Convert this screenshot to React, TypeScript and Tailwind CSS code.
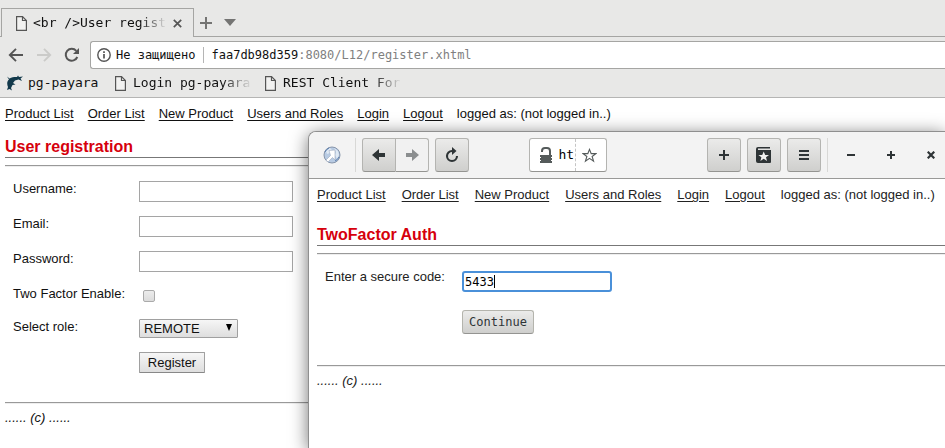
import React from "react";

const SANS = "font-['Liberation_Sans',Arial,sans-serif]";
const MONO = "font-['DejaVu_Sans_Mono',monospace]";

const LINKS = ["Product List", "Order List", "New Product", "Users and Roles", "Login", "Logout"];

function PageIcon() {
  return (
    <svg width="11" height="15" viewBox="0 0 11 15" fill="none" stroke="#555" className="shrink-0">
      <path d="M.6.6H6.5L10.4 4.5V14.4H.6Z" fill="#f2f2f1" strokeWidth="1.2" />
      <path d="M6.5.6V4.5H10.4" strokeWidth="1.2" />
    </svg>
  );
}

function SiteNav({ gap }: { gap: string }) {
  return (
    <nav className={`flex whitespace-nowrap leading-4 ${gap}`}>
      {LINKS.map((l) => (
        <a key={l} href="#" className="underline underline-offset-2">
          {l}
        </a>
      ))}
      <span>logged as: (not logged in..)</span>
    </nav>
  );
}

function Title({ children }: { children: React.ReactNode }) {
  return (
    <h1 className="border-b border-[#777] text-base leading-5 font-bold text-[#d6000c]">{children}</h1>
  );
}

function Rule({ className }: { className: string }) {
  return <hr className={`h-[2px] border-t border-b border-t-[#999] border-b-[#eee] ${className}`} />;
}

function Footer() {
  return <footer className="mt-[6px] leading-4 italic">...... (c) ......</footer>;
}

function TabStrip() {
  return (
    <div className="flex h-[37px] items-end">
      <div className="h-full w-[1px] shrink-0 border-b border-[#a5a5a3]" />
      <div className="flex h-[29px] w-[193px] shrink-0 items-center border-x border-t border-[#a5a5a3] pr-2 pl-[14px]">
        <PageIcon />
        <span className="ml-[6px] w-[134px] shrink-0 mask-r-from-80% text-[13px] whitespace-nowrap">
          {"<br />User regist"}
        </span>
        <button aria-label="Close tab" className="ml-[6px] shrink-0">
          <svg width="9" height="9" viewBox="0 0 9 9" stroke="#555" strokeWidth="1.7">
            <path d="M.8.8 8.2 8.2M8.2.8.8 8.2" />
          </svg>
        </button>
      </div>
      <div className="flex h-full grow items-end gap-3 border-b border-[#a5a5a3] pb-[7px] pl-[6px]">
        <button aria-label="New tab">
          <svg width="12" height="12" viewBox="0 0 12 12" stroke="#747473" strokeWidth="2">
            <path d="M6 0V12M0 6H12" />
          </svg>
        </button>
        <button aria-label="Tab list" className="pb-[3px]">
          <svg width="12" height="7" viewBox="0 0 12 7" fill="#747473">
            <path d="M0 0H12L6 7Z" />
          </svg>
        </button>
      </div>
    </div>
  );
}

function AddressBar() {
  return (
    <div className="flex h-8 items-center pt-1 pl-2">
      <button aria-label="Back">
        <svg width="16" height="14" viewBox="0 0 16 14" fill="none" stroke="#555" strokeWidth="1.9">
          <path d="M15 7H2M8 .8 1.8 7 8 13.2" />
        </svg>
      </button>
      <button aria-label="Forward" className="ml-3">
        <svg width="16" height="14" viewBox="0 0 16 14" fill="none" stroke="#cbcbc9" strokeWidth="1.9">
          <path d="M1 7H14M8 .8 14.2 7 8 13.2" />
        </svg>
      </button>
      <button aria-label="Reload" className="ml-3">
        <svg width="16" height="16" viewBox="0 0 16 16" fill="none" stroke="#555" strokeWidth="2">
          <path d="M13.3 10A6 6 0 1 1 12.3 3.8" />
          <path d="M15 1V7H9Z" fill="#555" stroke="none" />
        </svg>
      </button>
      <div className="ml-[10px] flex h-7 grow items-center rounded-l-[3px] border border-r-0 border-[#a5a5a3] bg-white pl-[6px] text-xs">
        <svg width="14" height="14" viewBox="0 0 14 14" fill="none" stroke="#555" className="shrink-0">
          <circle cx="7" cy="7" r="6.2" strokeWidth="1.4" />
          <path d="M7 6V10.5M7 3.2V4.9" strokeWidth="1.7" />
        </svg>
        <span className="ml-[5px] whitespace-nowrap">Не защищено</span>
        <span className="ml-2 h-4 w-px shrink-0 bg-[#b5b5b5]" />
        <span className="ml-[7px] whitespace-nowrap">
          faa7db98d359<span className="text-[#808080]">:8080/L12/register.xhtml</span>
        </span>
      </div>
    </div>
  );
}

function Bookmarks() {
  return (
    <div className="flex h-[29px] items-center border-b border-[#b5b5b4] pl-[7px] text-[13px] whitespace-nowrap">
      <svg width="16" height="16" viewBox="0 0 16 16" fill="#12394b" className="shrink-0">
        <path d="M0 1.5 2.5 3.5C5 1.8 8 2 10 2L11 .5 12 2 16 1.5 13.5 3.5 15 6 11.5 4.5 8 5.5 6 8 8.5 9.5 5.5 10 4 13 5 15.5 2.5 14 0 15 1 12C-.3 9 0 6 2 4.5Z" />
      </svg>
      <a href="#" className="ml-[5px] w-[73px] shrink-0">pg-payara</a>
      <span className="ml-[14px] flex"><PageIcon /></span>
      <a href="#" className="ml-[7px] w-[119px] shrink-0 mask-r-from-75%">Login pg-payara</a>
      <span className="ml-[13px] flex"><PageIcon /></span>
      <a href="#" className="ml-[7px] w-[119px] shrink-0 mask-r-from-75%">REST Client For</a>
    </div>
  );
}

function TextRow({ id, label, type }: { id: string; label: string; type: string }) {
  return (
    <>
      <label htmlFor={id}>{label}</label>
      <input id={id} type={type} className="h-[21px] w-[154px] border border-[#a5a5a5] bg-white px-1 outline-none" />
    </>
  );
}

function RegisterPage() {
  return (
    <main className={`px-[5px] pt-2 text-[13px] text-[#111] ${SANS}`}>
      <SiteNav gap="gap-[14px]" />
      <div className="mt-[15px]">
        <Title>User registration</Title>
      </div>
      <Rule className="mt-[7px]" />
      <form
        className="mt-[14px] grid grid-cols-[126px_1fr] items-start gap-y-[14px] pl-2 leading-4"
        onSubmit={(e) => e.preventDefault()}
      >
        <TextRow id="username" label="Username:" type="text" />
        <TextRow id="email" label="Email:" type="email" />
        <TextRow id="password" label="Password:" type="password" />
        <label htmlFor="twofactor">Two Factor Enable:</label>
        <div className="flex h-[19px] items-center pl-1">
          <input
            id="twofactor"
            type="checkbox"
            className="size-3 appearance-none rounded-[2px] border border-[#aaa] bg-linear-to-b from-[#ececec] to-[#dcdcdc]"
          />
        </div>
        <label htmlFor="role">Select role:</label>
        <div className="relative w-[99px]">
          <select
            id="role"
            className="block h-[19px] w-full appearance-none rounded-[1px] border border-[#a0a0a0] bg-linear-to-b from-[#f6f6f6] to-[#dedede] pl-1 leading-4"
          >
            <option>REMOTE</option>
          </select>
          <svg width="6" height="7" viewBox="0 0 6 7" className="pointer-events-none absolute top-[5px] right-[6px]">
            <path d="M0 0H6L3 7Z" />
          </svg>
        </div>
        <span />
        <button className="h-[21px] w-[66px] rounded-[1px] border border-[#a0a0a0] border-b-[#888] bg-linear-to-b from-[#f6f6f6] to-[#dedede]">
          Register
        </button>
      </form>
      <Rule className="mt-[29px]" />
      <Footer />
    </main>
  );
}

const GTK = "flex h-[34px] items-center justify-center border border-[#b4b4b1] border-b-[#949491]";
const RAISED = "bg-linear-to-b from-[#ebebea] to-[#cfcfcd]";

function ToolButton({ label, children }: { label: string; children: React.ReactNode }) {
  return (
    <button aria-label={label} className={`w-[34px] shrink-0 rounded-[3px] ${GTK} ${RAISED}`}>
      {children}
    </button>
  );
}

function WindowBar() {
  return (
    <header className="flex h-[47px] items-center rounded-tl-[7px] border-b border-[#999997] bg-[#f3f3f3]">
      <svg width="18" height="18" viewBox="0 0 18 18" className="ml-[14px] shrink-0">
        <circle cx="9" cy="9" r="8" fill="#b8cbe3" stroke="#8795aa" />
        <path d="M3 5 7 2 9 4 7 7 4 8ZM11 2 15 5 16 9 14 13 12 9 13 6Z" fill="#dfe9f4" />
        <path d="M6 4.5 12 4V14L9.5 11.5 5 16 3 14 7.5 9.5Z" fill="#fff" stroke="#9eaabd" strokeWidth=".6" />
        <path d="M2 6A8 8 0 0 1 6 2M12 15A8 8 0 0 0 16 11" stroke="#5c7fae" fill="none" />
      </svg>
      <span className="ml-[14px] h-[34px] w-px shrink-0 bg-[#d8d8d6]" />
      <button aria-label="Back" className={`ml-[6px] w-[34px] shrink-0 rounded-l-[3px] ${GTK} ${RAISED}`}>
        <svg width="14" height="12" viewBox="0 0 14 12" fill="#2e3436">
          <path d="M0 6 7 0V4H13V8H7V12Z" />
        </svg>
      </button>
      <button aria-label="Forward" className={`w-[33px] shrink-0 rounded-r-[3px] border-l-0 bg-[#f1f1f1] ${GTK}`}>
        <svg width="14" height="12" viewBox="0 0 14 12" fill="#8b8e8f">
          <path d="M14 6 7 0V4H1V8H7V12Z" />
        </svg>
      </button>
      <span className="w-[6px] shrink-0" />
      <ToolButton label="Reload">
        <svg width="14" height="16" viewBox="0 0 14 16" fill="none" stroke="#2e3436" strokeWidth="2.1">
          <path d="M8.5 4H7A5 5 0 1 0 12 9" />
          <path d="M7 0 11.5 4 7 8Z" fill="#2e3436" stroke="none" />
        </svg>
      </ToolButton>
      <div className="flex grow justify-center pr-10">
        <div className={`w-[78px] rounded-[3px] bg-white ${GTK}`}>
          <svg width="12" height="17" viewBox="0 0 12 17" className="shrink-0">
            <path d="M2 5V4A3 3 0 0 1 5 1H7A3 3 0 0 1 10 4V8" fill="none" stroke="#555b5b" strokeWidth="2" />
            <path d="M0 8H12V10H0ZM1 10H11V11H1ZM0 11H12V13H0ZM1 13H11V14H1ZM0 14H12V16H0Z" fill="#555b5b" />
          </svg>
          <span className={`ml-[7px] w-4 text-[13px] text-black ${MONO}`}>ht</span>
          <span className="h-full border-l border-dashed border-[#c5c5c5]" />
          <button aria-label="Bookmark page" className="ml-[6px] shrink-0">
            <svg width="15" height="15" viewBox="0 0 16 16" fill="none" stroke="#555b5b" strokeWidth="1.2">
              <path d="M8 1.5 9.8 6H14.7L10.8 9 12.3 14 8 11 3.7 14 5.2 9 1.3 6H6.2Z" />
            </svg>
          </button>
        </div>
      </div>
      <div className="flex shrink-0 gap-[6px]">
        <ToolButton label="New tab">
          <svg width="10" height="10" viewBox="0 0 10 10" stroke="#2e3436" strokeWidth="2">
            <path d="M5 0V10M0 5H10" />
          </svg>
        </ToolButton>
        <ToolButton label="Bookmarks">
          <svg width="16" height="16" viewBox="0 0 16 16">
            <path d="M0 2Q0 0 2 0H14V1.5H2V3H15V15Q15 16 14 16H2Q0 16 0 14Z" fill="#2e3436" />
            <path d="M7.7 4.5 9.2 8H13L10 10.2 11 14 7.7 11.8 4.4 14 5.4 10.2 2.4 8H6.2Z" fill="#f0f0ef" />
          </svg>
        </ToolButton>
        <ToolButton label="Menu">
          <svg width="10" height="10" viewBox="0 0 10 10" stroke="#2e3436" strokeWidth="2">
            <path d="M0 1H10M0 5H10M0 9H10" />
          </svg>
        </ToolButton>
      </div>
      <span className="ml-[6px] h-[34px] w-px shrink-0 bg-[#d8d8d6]" />
      <div className="ml-[19px] mr-[10px] flex shrink-0 gap-8">
        <button aria-label="Minimize">
          <svg width="8" height="8" viewBox="0 0 8 8" stroke="#2e3436" strokeWidth="2">
            <path d="M0 4H8" />
          </svg>
        </button>
        <button aria-label="Maximize">
          <svg width="8" height="8" viewBox="0 0 8 8" stroke="#2e3436" strokeWidth="2">
            <path d="M0 4H8M4 0V8" />
          </svg>
        </button>
        <button aria-label="Close">
          <svg width="8" height="8" viewBox="0 0 8 8" stroke="#2e3436" strokeWidth="2.2">
            <path d="M.7.7 7.3 7.3M7.3.7.7 7.3" />
          </svg>
        </button>
      </div>
    </header>
  );
}

function AuthWindow() {
  return (
    <section
      className={`absolute top-[131px] right-0 bottom-0 left-[308px] rounded-tl-[8px] border-t border-l border-[#8f8f8f] bg-white text-[13px] text-[#222] shadow-[0_3px_18px_rgba(0,0,0,0.55)] ${SANS}`}
    >
      <WindowBar />
      <div className="pt-2 pl-2">
        <SiteNav gap="gap-4" />
        <div className="mt-[22px]">
          <Title>TwoFactor Auth</Title>
        </div>
        <Rule className="mt-[7px]" />
        <form
          className="mt-[14px] grid grid-cols-[137px_1fr] gap-y-[18px] pl-2 leading-4"
          onSubmit={(e) => e.preventDefault()}
        >
          <label htmlFor="code">Enter a secure code:</label>
          <div className="relative mt-[2px] w-[150px]">
            <input
              id="code"
              defaultValue="5433"
              className={`block h-[21px] w-full rounded-[3px] border-2 border-[#4a90d9] bg-white px-px text-xs text-black caret-transparent outline-none ${MONO}`}
            />
            <span className="absolute top-1 left-8 h-[13px] w-px bg-black" />
          </div>
          <span />
          <button
            className={`h-6 w-[72px] rounded-[3px] border border-[#b4b4ad] border-b-[#949491] text-xs text-[#2e3436] ${RAISED} ${MONO}`}
          >
            Continue
          </button>
        </form>
        <Rule className="mt-[31px]" />
        <Footer />
      </div>
    </section>
  );
}

export default function App() {
  return (
    <div className="relative h-screen overflow-hidden bg-white">
      <div className={`bg-[#e8e8e7] text-[#111] ${MONO}`}>
        <TabStrip />
        <AddressBar />
        <Bookmarks />
      </div>
      <RegisterPage />
      <AuthWindow />
    </div>
  );
}
